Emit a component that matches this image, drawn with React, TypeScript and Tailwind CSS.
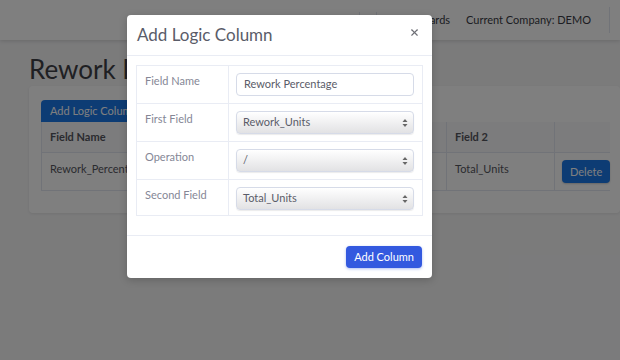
import { X } from 'lucide-react';

const font = { fontFamily: 'Lato, "Open Sans", sans-serif' };

function SelectBox({ value }: { value: string }) {
    return (
        <div className="flex h-[23px] w-full items-center justify-between rounded-[4px] border border-[#d6dbe8] bg-gradient-to-b from-[#ffffff] to-[#e2e2e4] pl-[6px] pr-[5px] text-[11px] text-[#5a5c69] shadow-[0_1px_1px_rgba(0,0,0,0.08)]">
            <span>{value}</span>
            <svg width="6" height="10" viewBox="0 0 6 10">
                <path d="M3 1 L5.5 4 H0.5 Z" fill="#666" />
                <path d="M3 9 L5.5 6 H0.5 Z" fill="#666" />
            </svg>
        </div>
    );
}

function App() {
    const rows = [
        { label: 'First Field', value: 'Rework_Units', last: false },
        { label: 'Operation', value: '/', last: false },
        { label: 'Second Field', value: 'Total_Units', last: true },
    ];

    return (
        <div className="relative h-[360px] w-[620px] overflow-hidden bg-[#f6f6f7]" style={font}>
            {/* top nav */}
            <div className="flex h-[40px] items-center justify-end bg-white pr-[10px] text-[11px] text-[#3a3b45] shadow-[0_1px_4px_rgba(0,0,0,0.15)]">
                <div className="mr-[16px] h-[16px] border-r border-[#e3e6f0]" />
                <div className="mr-[16px] h-[16px] border-r border-[#e3e6f0]" />
                <span className="mr-[16px]">Dashboards</span>
                <span className="mr-[18px]">Current Company: DEMO</span>
                <div className="h-[26px] border-r border-[#e3e6f0]" />
            </div>

            {/* page */}
            <div className="pl-[29px] pt-[13px]">
                <h1 className="text-[26px] leading-[32px] text-[#3f4046]">Rework Logic Columns</h1>
                <div className="mt-[1px] rounded-[4px] bg-white px-[12px] pb-[22px] pt-[11px] shadow-[0_1px_3px_rgba(0,0,0,0.08)]">
                    <button className="h-[22px] rounded-t-[4px] bg-[#1a78e8] px-[9px] text-[11px] text-white">Add Logic Column</button>
                    <div className="grid grid-cols-[405px_108px_1fr] text-[11px] text-[#55565e]">
                        <div className="flex h-[31px] items-center border-b border-l border-[#e3e6f0] bg-[#f8f8fa] pl-[8px] font-bold">Field Name</div>
                        <div className="flex h-[31px] items-center border-b border-l border-[#e3e6f0] bg-[#f8f8fa] pl-[8px] font-bold">Field 2</div>
                        <div className="h-[31px] border-b border-l border-[#e3e6f0] bg-[#f8f8fa]" />
                        <div className="h-[38px] border-b border-l border-[#e3e6f0] pl-[8px] pt-[8px]">Rework_Percentage</div>
                        <div className="h-[38px] border-b border-l border-[#e3e6f0] pl-[8px] pt-[8px]">Total_Units</div>
                        <div className="h-[38px] border-b border-l border-[#e3e6f0] pl-[7px] pt-[7px]">
                            <button className="h-[23px] rounded-[4px] bg-[#1a78e8] px-[8px] text-[11px] text-white shadow-[0_1px_2px_rgba(0,0,0,0.2)]">Delete</button>
                        </div>
                    </div>
                </div>
            </div>

            {/* modal */}
            <div className="absolute inset-0 bg-black/50">
                <div className="ml-[127px] mt-[15px] w-[305px] rounded-[4px] bg-white shadow-[0_2px_8px_rgba(0,0,0,0.2)]">
                    <div className="flex h-[41px] items-center justify-between border-b border-[#e9ecf4] pl-[10px] pr-[12px]">
                        <h2 className="text-[17px] text-[#5a5c69]">Add Logic Column</h2>
                        <X size={11} strokeWidth={2.5} className="-mt-[6px] text-[#6e6f76]" />
                    </div>
                    <div className="px-[9px] pb-[19px] pt-[9px]">
                        <div className="border border-[#e9ecf4] text-[11px] text-[#858796]">
                            <div className="flex h-[38px] border-b border-[#e9ecf4]">
                                <div className="w-[92px] border-r border-[#e9ecf4] pl-[8px] pt-[7px]">Field Name</div>
                                <div className="flex-1 pl-[7px] pr-[8px] pt-[7px]">
                                    <div className="flex h-[23px] items-center rounded-[4px] border border-[#d6dbe8] pl-[7px] text-[11px] text-[#5a5c69]">Rework Percentage</div>
                                </div>
                            </div>
                            {rows.map((r) => (
                                <div key={r.label} className={r.last ? 'flex h-[35px]' : 'flex h-[38px] border-b border-[#e9ecf4]'}>
                                    <div className="w-[92px] border-r border-[#e9ecf4] pl-[8px] pt-[7px]">{r.label}</div>
                                    <div className="flex-1 pl-[7px] pr-[8px] pt-[7px]">
                                        <SelectBox value={r.value} />
                                    </div>
                                </div>
                            ))}
                        </div>
                    </div>
                    <div className="flex justify-end border-t border-[#e9ecf4] px-[10px] py-[10px]">
                        <button className="h-[22px] rounded-[4px] bg-[#3359df] px-[8px] text-[11px] text-white shadow-[0_1px_3px_rgba(51,89,223,0.4)]">Add Column</button>
                    </div>
                </div>
            </div>
        </div>
    );
}

export default App;
